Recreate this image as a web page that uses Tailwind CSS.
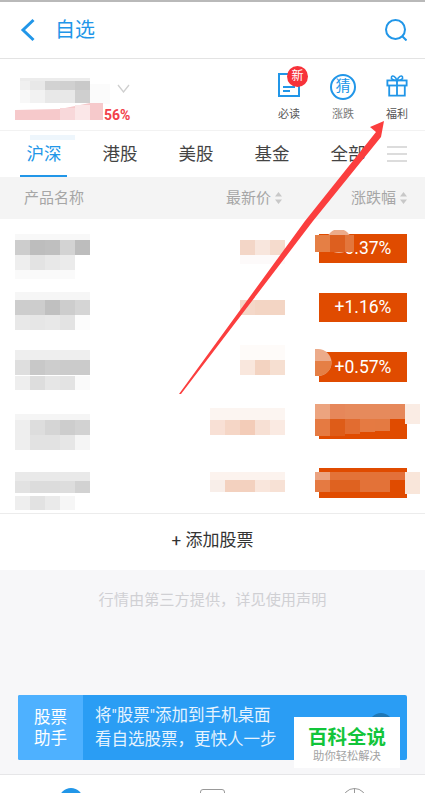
<!DOCTYPE html>
<html lang="zh-CN">
<head>
    <meta charset="UTF-8">
    <meta name="viewport" content="width=device-width, initial-scale=1.0">
    <title>自选</title>
    <script src="https://cdn.jsdelivr.net/npm/@tailwindcss/browser@4"></script>
</head>
<body class="bg-white">
<div class="relative w-[425px] h-[793px] overflow-hidden bg-white font-['Roboto','Noto_Sans_CJK_SC',sans-serif]">

    <!-- top bar -->
    <div class="h-[2px] bg-[#b9b9b9]"></div>
    <header class="h-[57px] flex items-center border-b border-[#e3e3e3] pl-[20px] pr-[18px]">
        <svg width="16" height="24" viewBox="0 0 16 24" fill="none" stroke="#2196e8" stroke-width="3"><path d="M13.5 2 L3 12 L13.5 22"/></svg>
        <span class="ml-[19px] text-[20px] leading-none text-[#2196e8]">自选</span>
        <svg class="ml-auto" width="22" height="22" viewBox="0 0 22 22" fill="none" stroke="#2196e8" stroke-width="2"><circle cx="10.5" cy="10.5" r="9.5"/><path d="M17 17 L21.5 21.5"/></svg>
    </header>

    <!-- account + shortcuts -->
    <section class="relative h-[72px] flex items-start justify-end border-b border-[#f2f2f2] pr-px">
        <span class="absolute left-[104px] top-[46px] text-[14px] leading-[20px] font-bold text-[#f2404a]">56%</span>
        <svg class="absolute left-[117px] top-[25px]" width="13" height="9" viewBox="0 0 13 9" fill="none" stroke="#cfcfcf" stroke-width="1.3"><path d="M1 1 L6.5 8 L12 1"/></svg>
        <svg class="absolute left-[15px] top-[17px]" width="100" height="64" viewBox="0 0 100 64">
            <rect x="5" y="2" width="70" height="8" fill="#ececec"/>
            <rect y="5" x="5" width="10" height="9" fill="#f0f0f0"/><rect y="5" x="15" width="15" height="9" fill="#e8e8e8"/><rect y="5" x="30" width="15" height="9" fill="#d2d2d2"/><rect y="5" x="45" width="15" height="9" fill="#d0d0d0"/><rect y="5" x="60" width="15" height="9" fill="#c9c9c9"/>
            <rect y="14" x="5" width="10" height="13" fill="#f8f8f8"/><rect y="14" x="15" width="15" height="13" fill="#f2f2f2"/><rect y="14" x="30" width="15" height="13" fill="#e8e8e8"/><rect y="14" x="45" width="15" height="13" fill="#e8e8e8"/><rect y="14" x="60" width="15" height="13" fill="#cfcfcf"/><rect y="8" x="75" width="20" height="20" fill="#fbfbfb"/>
            <polygon points="0,34 45,33 75,27 88,27 88,44 0,44" fill="#f6c9cb"/>
            <rect x="45" y="32" width="15" height="12" fill="#f8d8da"/><rect x="60" y="29" width="15" height="15" fill="#fbe7e8"/>
            <rect x="15" y="59" width="45" height="5" fill="#eef6fc"/>
        </svg>

        <div class="w-[54px] flex flex-col items-center pt-[6px]">
            <div class="relative h-[35px] w-[30px]">
                <svg class="absolute left-[3px] top-[7px]" width="24" height="26" viewBox="0 0 24 26" fill="none" stroke="#2196e8" stroke-width="2"><rect x="2" y="2" width="20" height="22"/><path d="M6 15 H18 M6 19 H13"/></svg>
                <span class="absolute left-[13px] top-px w-[21px] h-[21px] rounded-full bg-[#f7323a] text-white text-[12px] leading-[21px] text-center">新</span>
            </div>
            <span class="mt-[8px] text-[11px] leading-[14px] text-[#555]">必读</span>
        </div>
        <div class="w-[54px] flex flex-col items-center pt-[6px]">
            <div class="h-[35px] flex items-end">
                <span class="w-[26px] h-[26px] rounded-full border-[2px] border-[#2196e8] text-[#2196e8] text-[15px] leading-[21px] text-center">猜</span>
            </div>
            <span class="mt-[8px] text-[11px] leading-[14px] text-[#777]">涨跌</span>
        </div>
        <div class="w-[54px] flex flex-col items-center pt-[6px]">
            <div class="h-[35px] flex items-end">
                <svg class="mb-[3px]" width="22" height="23" viewBox="0 0 24 25" fill="none" stroke="#2196e8" stroke-width="2"><rect x="1.5" y="7" width="21" height="5.5"/><path d="M3.5 12.5 V23.5 H20.5 V12.5 M12 7 V23.5"/><path d="M12 7 C8 7 5 5.5 6 3 C7 0.8 10.5 2.5 12 7 C13.5 2.5 17 0.8 18 3 C19 5.5 16 7 12 7 Z" stroke-width="1.7"/></svg>
            </div>
            <span class="mt-[8px] text-[11px] leading-[14px] text-[#555]">福利</span>
        </div>
    </section>

    <!-- market tabs -->
    <nav class="relative h-[46px] flex items-center pl-[6px] text-[17.5px] text-[#444]">
        <span class="w-[76px] text-center text-[#2196e8]">沪深</span>
        <span class="w-[76px] text-center">港股</span>
        <span class="w-[76px] text-center">美股</span>
        <span class="w-[76px] text-center">基金</span>
        <span class="w-[76px] text-center">全部</span>
        <span class="absolute left-[20px] bottom-0 w-[47px] h-[2px] bg-[#2196e8]"></span>
        <div class="absolute left-[387px] top-[15px] w-[20px] flex flex-col gap-[5px]">
            <span class="h-[2px] bg-[#dcdcdc]"></span><span class="h-[2px] bg-[#dcdcdc]"></span><span class="h-[2px] bg-[#dcdcdc]"></span>
        </div>
    </nav>

    <!-- table head -->
    <div class="h-[42px] flex items-center bg-[#f4f4f4] text-[15px] text-[#a6a6a6]">
        <span class="ml-[24px]">产品名称</span>
        <span class="ml-auto">最新价</span>
        <svg class="ml-[4px]" width="7" height="12" viewBox="0 0 7 12" fill="#c8c8c8"><path d="M3.5 0 L7 4.5 H0 Z M3.5 12 L0 7.5 H7 Z"/></svg>
        <span class="ml-[69px]">涨跌幅</span>
        <svg class="ml-[4px] mr-[18px]" width="7" height="12" viewBox="0 0 7 12" fill="#c8c8c8"><path d="M3.5 0 L7 4.5 H0 Z M3.5 12 L0 7.5 H7 Z"/></svg>
    </div>

    <!-- stock rows -->
    <div class="border-b border-[#ececec]">
        <div class="relative h-[59px] flex items-center justify-end pr-[18px]">
            <svg class="absolute left-[15px] top-[15px]" width="90" height="46" viewBox="0 0 90 46">
                <rect width="75" height="6" fill="#f8f8f8"/>
                <rect y="6" x="0" width="15" height="15" fill="#cdcdcd"/><rect y="6" x="15" width="15" height="15" fill="#bdbdbd"/><rect y="6" x="30" width="15" height="15" fill="#bfbfbf"/><rect y="6" x="45" width="15" height="15" fill="#d3d3d3"/><rect y="6" x="60" width="15" height="15" fill="#bdbdbd"/>
                <rect y="21" x="0" width="15" height="15" fill="#eeeeee"/><rect y="21" x="15" width="15" height="15" fill="#e3e3e3"/><rect y="21" x="30" width="15" height="15" fill="#e8e8e8"/><rect y="21" x="45" width="15" height="15" fill="#ebebeb"/>
                <rect y="36" width="60" height="9" fill="#fafafa"/>
            </svg>
            <svg class="absolute left-[240px] top-[21px]" width="45" height="25" viewBox="0 0 45 25">
                <rect y="0" x="0" width="15" height="15" fill="#f3d6c7"/><rect y="0" x="15" width="15" height="15" fill="#f8e6dd"/><rect y="0" x="30" width="15" height="15" fill="#f5dbcd"/>
                <rect y="15" width="45" height="9" fill="#fdfafa"/>
            </svg>
            <div class="relative w-[88px] h-[29px] bg-[#e04b00] text-white text-[17.5px] leading-[29px] text-center">
                +0.37%
                <svg class="absolute left-[-4px] top-[-4px]" width="46" height="28" viewBox="0 0 46 28">
                    <circle cx="24" cy="11" r="12" fill="#ecab8a"/>
                    <rect y="5" x="0" width="15" height="17" fill="#e57f45"/><rect y="5" x="15" width="15" height="17" fill="#dd5f1f"/><rect y="5" x="30" width="9" height="17" fill="#e3763c"/>
                </svg>
            </div>
        </div>
        <div class="relative h-[59px] flex items-center justify-end pr-[18px]">
            <svg class="absolute left-[15px] top-[14px]" width="90" height="38" viewBox="0 0 90 38">
                <rect width="75" height="8" fill="#f6f6f6"/>
                <rect y="8" x="0" width="15" height="15" fill="#cdcdcd"/><rect y="8" x="15" width="15" height="15" fill="#cdcdcd"/><rect y="8" x="30" width="15" height="15" fill="#c0c0c0"/><rect y="8" x="45" width="15" height="15" fill="#cdcdcd"/><rect y="8" x="60" width="15" height="15" fill="#d5d5d5"/>
                <rect y="23" x="0" width="15" height="15" fill="#e8e8e8"/><rect y="23" x="15" width="15" height="15" fill="#e6e6e6"/><rect y="23" x="30" width="15" height="15" fill="#e8e8e8"/><rect y="23" x="45" width="15" height="15" fill="#e3e3e3"/><rect y="23" x="60" width="15" height="15" fill="#fcfcfc"/>
            </svg>
            <svg class="absolute left-[240px] top-[22px]" width="45" height="15" viewBox="0 0 45 15">
                <rect width="15" height="15" fill="#f4d8c9"/><rect x="15" width="30" height="15" fill="#f3d5c4"/>
            </svg>
            <div class="w-[88px] h-[29px] bg-[#e04b00] text-white text-[17.5px] leading-[29px] text-center">+1.16%</div>
        </div>
        <div class="relative h-[59px] flex items-center justify-end pr-[18px]">
            <svg class="absolute left-[15px] top-[13px]" width="90" height="40" viewBox="0 0 90 40">
                <rect width="75" height="10" fill="#eeeeee"/>
                <rect y="10" x="0" width="15" height="15" fill="#dedede"/><rect y="10" x="15" width="15" height="15" fill="#c8c8c8"/><rect y="10" x="30" width="15" height="15" fill="#cdcdcd"/><rect y="10" x="45" width="30" height="15" fill="#cbcbcb"/>
                <rect y="26" x="0" width="15" height="14" fill="#eeeeee"/><rect y="26" x="15" width="15" height="14" fill="#dddddd"/><rect y="26" x="30" width="15" height="14" fill="#e6e6e6"/><rect y="26" x="45" width="15" height="14" fill="#e3e3e3"/><rect y="26" x="60" width="15" height="14" fill="#fafafa"/>
            </svg>
            <svg class="absolute left-[240px] top-[8px]" width="45" height="30" viewBox="0 0 45 30">
                <rect width="45" height="15" fill="#fefbf9"/>
                <rect y="15" x="0" width="15" height="15" fill="#f9e7dd"/><rect y="15" x="15" width="15" height="15" fill="#f3d3c1"/><rect y="15" x="30" width="15" height="15" fill="#f6dfd1"/>
            </svg>
            <div class="relative w-[88px] h-[30px] bg-[#e04b00] text-white text-[17.5px] leading-[30px] text-center">
                +0.57%
                <svg class="absolute left-[-4px] top-[-3px]" width="18" height="27" viewBox="0 0 18 27">
                    <path d="M0 0 A13.5 13.5 0 0 1 0 27 Z" transform="translate(3,0)" fill="#ecab8a"/>
                    <rect width="3" height="27" fill="#ecab8a"/>
                    <path d="M0 12 H16.5 A13.5 13.5 0 0 1 3 27 H0 Z" fill="#e57f45"/>
                </svg>
            </div>
        </div>
        <div class="relative h-[59px] flex items-center justify-end pr-[18px] pb-[3px]">
            <svg class="absolute left-[15px] top-[18px]" width="90" height="37" viewBox="0 0 90 37">
                <rect width="75" height="6" fill="#f5f5f5"/>
                <rect y="6" x="0" width="15" height="15" fill="#eeeeee"/><rect y="6" x="15" width="15" height="15" fill="#dddddd"/><rect y="6" x="30" width="15" height="15" fill="#d5d5d5"/><rect y="6" x="45" width="15" height="15" fill="#cdcdcd"/><rect y="6" x="60" width="15" height="15" fill="#d2d2d2"/>
                <rect y="21" x="0" width="15" height="15" fill="#eeeeee"/><rect y="21" x="15" width="15" height="15" fill="#e2e2e2"/><rect y="21" x="30" width="15" height="15" fill="#e2e2e2"/><rect y="21" x="45" width="15" height="15" fill="#e6e6e6"/><rect y="21" x="60" width="15" height="15" fill="#f5f5f5"/>
            </svg>
            <svg class="absolute left-[210px] top-[12px]" width="75" height="27" viewBox="0 0 75 27">
                <rect width="75" height="12" fill="#fcf5f1"/>
                <rect y="12" x="0" width="15" height="15" fill="#f8e0d5"/><rect y="12" x="15" width="15" height="15" fill="#f5d6c6"/><rect y="12" x="30" width="15" height="15" fill="#f3ccb8"/><rect y="12" x="45" width="15" height="15" fill="#f7e0d4"/><rect y="12" x="60" width="15" height="15" fill="#faeae2"/>
            </svg>
            <div class="relative w-[88px] h-[30px] bg-[#e04b00] text-white text-[16px] leading-[30px] text-center">
                <svg class="absolute left-[-4px] top-[-5px]" width="105" height="33" viewBox="0 0 105 33">
                    <rect x="0" y="0" width="15" height="15" fill="#eca47f"/><rect x="15" y="0" width="15" height="15" fill="#e6875a"/><rect x="30" y="0" width="45" height="15" fill="#e68a5c"/><rect x="75" y="0" width="15" height="15" fill="#e6885a"/><rect x="90" y="0" width="15" height="20" fill="#faece4"/>
                    <rect x="0" y="15" width="15" height="17" fill="#e57a42"/><rect x="15" y="15" width="15" height="17" fill="#de5c18"/><rect x="30" y="15" width="15" height="15" fill="#e26c30"/><rect x="45" y="15" width="15" height="13" fill="#e57a42"/><rect x="60" y="15" width="15" height="12" fill="#e47a42"/>
                </svg>
            </div>
        </div>
        <div class="relative h-[58px] flex items-center justify-end pr-[18px] pb-[2px]">
            <svg class="absolute left-[15px] top-[17px]" width="90" height="38" viewBox="0 0 90 38">
                <rect y="0" width="75" height="9" fill="#e9e9e9"/>
                <rect y="9" x="0" width="15" height="12" fill="#e2e2e2"/><rect y="9" x="15" width="30" height="12" fill="#dcdcdc"/><rect y="9" x="45" width="15" height="12" fill="#dddddd"/><rect y="9" x="60" width="15" height="12" fill="#d2d2d2"/>
                <rect y="24" x="0" width="15" height="14" fill="#eeeeee"/><rect y="24" x="15" width="15" height="14" fill="#e2e2e2"/><rect y="24" x="30" width="15" height="14" fill="#eaeaea"/><rect y="24" x="45" width="15" height="14" fill="#f6f6f6"/>
            </svg>
            <svg class="absolute left-[210px] top-[17px]" width="75" height="20" viewBox="0 0 75 20">
                <rect width="75" height="8" fill="#fcf3ee"/>
                <rect y="8" x="0" width="15" height="12" fill="#f8eee9"/><rect y="8" x="15" width="30" height="12" fill="#f3d1bf"/><rect y="8" x="45" width="15" height="12" fill="#f9e6dc"/><rect y="8" x="60" width="15" height="12" fill="#f7e1d5"/>
            </svg>
            <div class="relative w-[88px] h-[30px] bg-[#e04b00] text-white text-[16px] leading-[30px] text-center">
                <svg class="absolute left-[-4px] top-[4px]" width="105" height="24" viewBox="0 0 105 24">
                    <rect x="0" y="0" width="15" height="8" fill="#eba380"/><rect x="15" y="0" width="60" height="8" fill="#e37238"/><rect x="75" y="0" width="15" height="8" fill="#e3703a"/><rect x="90" y="0" width="15" height="22" fill="#f9e6da"/>
                    <rect x="0" y="8" width="15" height="12" fill="#e57a42"/><rect x="15" y="8" width="30" height="12" fill="#df6220"/><rect x="45" y="8" width="30" height="12" fill="#e37238"/>
                </svg>
            </div>
        </div>
    </div>

    <!-- add stock -->
    <div class="h-[56px] flex items-center justify-center bg-white text-[17px] pb-[2px] text-[#333]">+ 添加股票</div>

    <!-- footer area -->
    <div class="h-[204px] bg-[#f7f7f9] px-[18px] pt-[21px] flex flex-col">
        <p class="text-center text-[15.2px] leading-[18px] text-[#d0d0d4]">行情由第三方提供，详见使用声明</p>
        <div class="relative mt-[86px] h-[65px] flex rounded-[2px] overflow-hidden bg-[#2a9df4] text-white text-[16.5px] leading-[21px]">
            <div class="w-[65px] bg-[#4eb1ff] flex items-center justify-center text-center">股票<br>助手</div>
            <div class="pl-[12px] flex flex-col justify-center leading-[24px] text-[#e6f3fe]">
                <span>将"股票"添加到手机桌面</span>
                <span>看自选股票，更快人一步</span>
            </div>
            <span class="absolute left-[351px] top-[18px] w-[24px] h-[24px] rounded-full bg-[#1f77b5]"></span>
        </div>
    </div>

    <!-- bottom nav -->
    <div class="relative h-[19px] border-t border-[#e6e6e8] bg-white overflow-hidden">
        <span class="absolute left-[59px] top-[13px] w-[24px] h-[24px] rounded-full bg-[#2196e8]"></span>
        <span class="absolute left-[200px] top-[14px] w-[25px] h-[20px] rounded-[3px] border border-[#999]"></span>
        <span class="absolute left-[342px] top-[13px] w-[25px] h-[25px] rounded-full border border-[#999]"></span>
        <span class="absolute left-[354px] top-[13px] w-px h-[6px] bg-[#999]"></span>
    </div>

    <!-- watermark -->
    <div class="absolute left-[294px] top-[717px] w-[106px] h-[51px] bg-white flex flex-col items-center pt-[9px]">
        <span class="text-[19.5px] leading-[24px] font-bold text-[#12c53a]">百科全说</span>
        <span class="text-[11.3px] leading-[14px] text-[#a3a3a3]">助你轻松解决</span>
    </div>

    <!-- red annotation arrow -->
    <svg class="absolute left-0 top-0 pointer-events-none" width="425" height="793" viewBox="0 0 425 793">
        <polygon points="384,121 370,127 376,132 305,221 179,394 181,394 313,221 381,137" fill="#fb3e3e"/>
    </svg>
</div>
</body>
</html>
